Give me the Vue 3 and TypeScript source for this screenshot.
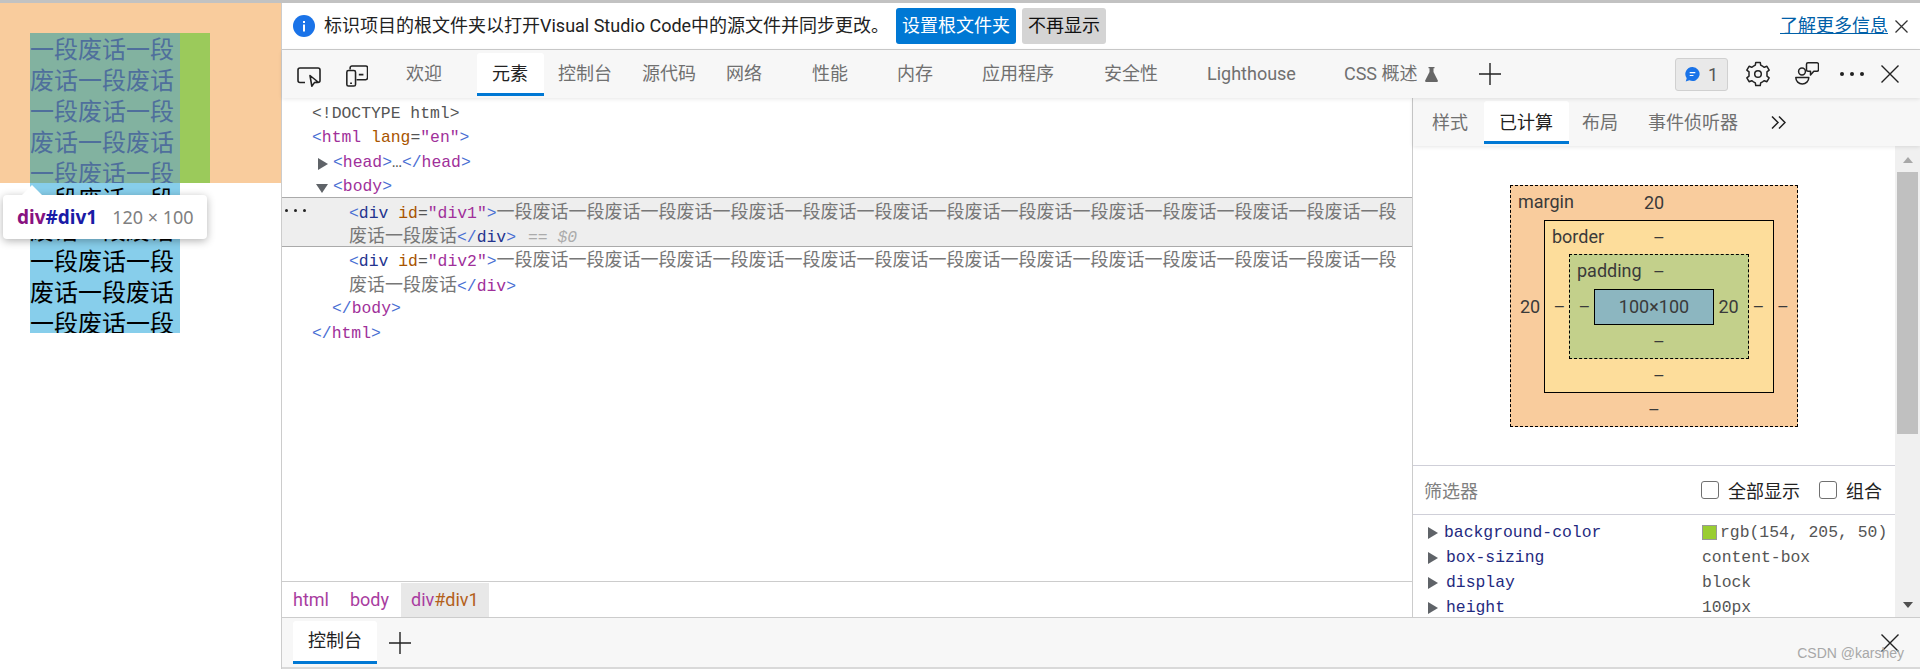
<script setup lang="ts">
interface Tab { label: string; gap: number; active?: boolean }
const tabs: Tab[] = [
  { label: '欢迎', gap: 0 },
  { label: '元素', gap: 50, active: true },
  { label: '控制台', gap: 30 },
  { label: '源代码', gap: 30 },
  { label: '网络', gap: 30 },
  { label: '性能', gap: 50 },
  { label: '内存', gap: 49 },
  { label: '应用程序', gap: 49 },
  { label: '安全性', gap: 50 },
  { label: 'Lighthouse', gap: 49 },
  { label: 'CSS 概述', gap: 48 },
]
const sideTabs: Tab[] = [
  { label: '样式', gap: 0 },
  { label: '已计算', gap: 31, active: true },
  { label: '布局', gap: 29 },
  { label: '事件侦听器', gap: 30 },
]
const phrase = '一段废话'
const longLine = phrase.repeat(12) + '一段'
const pageText = phrase.repeat(14)

const gearPath = (() => {
  const c = 12
  const pts: string[] = []
  for (let i = 0; i < 6; i++) {
    const a = (i * 60 - 90) * Math.PI / 180
    const list: Array<[number, number]> = [[-30, 9], [-17, 9.2], [-11, 11.8], [11, 11.8], [17, 9.2]]
    for (const [d, r] of list) {
      const t = a + d * Math.PI / 180
      pts.push(`${(c + r * Math.cos(t)).toFixed(2)} ${(c + r * Math.sin(t)).toFixed(2)}`)
    }
  }
  return 'M' + pts.join('L') + 'Z'
})()

const props = [
  { name: 'background-color', value: 'rgb(154, 205, 50)', swatch: true },
  { name: 'box-sizing', value: 'content-box' },
  { name: 'display', value: 'block' },
  { name: 'height', value: '100px' },
]
</script>

<template>
  <div class="root">
    <section class="page">
      <div class="page-band">
        <div class="div1"><div class="div1-content">{{ pageText }}</div></div>
      </div>
      <div class="div2">{{ pageText }}</div>
      <div class="tip">
        <span class="tip-arrow"></span>
        <b><span class="t-tag">div</span><span class="t-id">#div1</span></b>
        <span class="tip-size">120 × 100</span>
      </div>
    </section>

    <section class="devtools">
      <header class="info">
        <svg class="info-icon" viewBox="0 0 22 22" width="22" height="22">
          <circle cx="11" cy="11" r="11" fill="#1a73e8" />
          <rect x="10" y="9.5" width="2" height="7" fill="#fff" />
          <rect x="10" y="6" width="2" height="2" fill="#fff" />
        </svg>
        <span class="info-text">标识项目的根文件夹以打开Visual Studio Code中的源文件并同步更改。</span>
        <button class="btn primary">设置根文件夹</button>
        <button class="btn plain">不再显示</button>
        <a class="learn">了解更多信息</a>
        <svg class="info-close" viewBox="0 0 13 13" width="13" height="13">
          <path d="M.5.5l12 12M12.5.5l-12 12" stroke="#333" stroke-width="1.3" fill="none" />
        </svg>
      </header>

      <nav class="toolbar">
        <svg class="tool-a" viewBox="0 0 24 20" width="24" height="20" fill="none" stroke="#222" stroke-width="1.6">
          <path d="M8 15.5H3a2 2 0 0 1-2-2V3a2 2 0 0 1 2-2h18a2 2 0 0 1 2 2v10.5a2 2 0 0 1-2 2h-2" />
          <path d="M13 8.5l8 6.500-3.600.6-2.600 3.600z" stroke-linejoin="round" />
        </svg>
        <svg class="tool-b" viewBox="0 0 24 24" width="22" height="22" fill="none" stroke="#222" stroke-width="1.7">
          <path d="M4.500 5V3a2 2 0 0 1 2-2h15a2 2 0 0 1 2 2v11a2 2 0 0 1-2 2h-10" />
          <rect x=".9" y="6" width="9.500" height="17" rx="1.800" />
          <path d="M4.500 20h2M14 10.500h5" />
        </svg>
        <div class="tabs">
          <span v-for="t in tabs" :key="t.label" class="tab" :class="{ active: t.active }" :style="{ marginLeft: t.gap + 'px' }">{{ t.label }}</span>
        </div>
        <svg class="flask" viewBox="0 0 13 15" width="13" height="15">
          <path d="M3.500 0h6v1.200H8.500V5l4.300 8.500a1 1 0 0 1-.9 1.500H1.100a1 1 0 0 1-.9-1.500L4.500 5V1.200h-1z" fill="#666" />
        </svg>
        <svg class="plus" viewBox="0 0 22 22" width="22" height="22">
          <path d="M11 0v22M0 11h22" stroke="#222" stroke-width="1.400" />
        </svg>
        <span class="spacer"></span>
        <span class="chat">
          <svg viewBox="0 0 16 16" width="15" height="15">
            <path d="M8 0a7.500 7.500 0 1 1-3.300 14.200L.8 15.500l1-3.600A7.500 7.500 0 0 1 8 0z" fill="#1a73e8" />
            <path d="M5 6h6M5 9h4" stroke="#fff" stroke-width="1.200" />
          </svg>
          <span>1</span>
        </span>
        <svg class="gear" viewBox="-1 -1 26 26" width="26" height="26" fill="none" stroke="#222" stroke-width="1.500" stroke-linejoin="round">
          <path :d="gearPath" />
          <circle cx="12" cy="12" r="3.300" />
        </svg>
        <svg class="people" viewBox="0 0 24 24" width="24" height="24" fill="none" stroke="#222" stroke-width="1.500">
          <circle cx="7" cy="9.500" r="3.400" />
          <path d="M.8 15.500h13a6.500 6.500 0 0 1-13 0z" stroke-linejoin="round" />
          <path d="M13 .8h9a1.500 1.500 0 0 1 1.500 1.500v5.500a1.500 1.500 0 0 1-1.500 1.500h-3.200L15.500 13V9.300H13a1.500 1.500 0 0 1-1.500-1.500V2.300A1.500 1.500 0 0 1 13 .8z" stroke-linejoin="round" />
        </svg>
        <span class="dots"><i></i><i></i><i></i></span>
        <svg class="close" viewBox="0 0 18 18" width="18" height="18">
          <path d="M.5.5l17 17M17.500.5l-17 17" stroke="#222" stroke-width="1.400" />
        </svg>
      </nav>

      <div class="work">
        <div class="elements">
          <div class="code">
            <div class="row r0 doctype">&lt;!DOCTYPE html&gt;</div>
            <div class="row r0"><span class="b">&lt;</span><span class="p">html</span> <span class="a">lang</span><span class="g">=</span><span class="p">"en"</span><span class="b">&gt;</span></div>
            <div class="row r1"><i class="arr right"></i><span class="b">&lt;</span><span class="p">head</span><span class="b">&gt;</span><span class="g">…</span><span class="b">&lt;/</span><span class="p">head</span><span class="b">&gt;</span></div>
            <div class="row r1"><i class="arr down"></i><span class="b">&lt;</span><span class="p">body</span><span class="b">&gt;</span></div>
            <div class="selected">
              <span class="more"><i></i><i></i><i></i></span>
              <div class="row r2"><span class="b">&lt;</span><span class="n">div</span> <span class="a">id</span><span class="g">=</span><span class="p">"div1"</span><span class="b">&gt;</span><span class="cjk">{{ longLine }}</span></div>
              <div class="row r2"><span class="cjk">废话一段废话</span><span class="b">&lt;/</span><span class="n">div</span><span class="b">&gt;</span> <span class="eq">== $0</span></div>
            </div>
            <div class="row r2"><span class="b">&lt;</span><span class="n">div</span> <span class="a">id</span><span class="g">=</span><span class="p">"div2"</span><span class="b">&gt;</span><span class="cjk">{{ longLine }}</span></div>
            <div class="row r2"><span class="cjk">废话一段废话</span><span class="b">&lt;/</span><span class="p">div</span><span class="b">&gt;</span></div>
            <div class="row r1b"><span class="b">&lt;/</span><span class="p">body</span><span class="b">&gt;</span></div>
            <div class="row r0"><span class="b">&lt;/</span><span class="p">html</span><span class="b">&gt;</span></div>
          </div>
          <div class="crumbs">
            <span class="crumb c-html">html</span>
            <span class="crumb c-body">body</span>
            <span class="crumb c-cur"><span class="c-tag">div</span><span class="c-id">#div1</span></span>
          </div>
        </div>

        <aside class="side">
          <div class="side-tabs">
            <span v-for="t in sideTabs" :key="t.label" class="stab" :class="{ active: t.active }" :style="{ marginLeft: t.gap + 'px' }">{{ t.label }}</span>
            <svg class="chev" viewBox="0 0 15 13" width="15" height="13" fill="none" stroke="#222" stroke-width="1.500">
              <path d="M1 .5l6 6-6 6M8 .5l6 6-6 6" />
            </svg>
          </div>
          <div class="side-body">
            <div class="side-main">
              <div class="bm-wrap">
                <div class="bm bm-margin">
                  <span class="bm-label">margin</span>
                  <span class="bm-top">20</span>
                  <span class="bm-side l">20</span>
                  <div class="bm bm-border">
                    <span class="bm-label">border</span>
                    <span class="bm-top">–</span>
                    <span class="bm-side l">–</span>
                    <div class="bm bm-padding">
                      <span class="bm-label">padding</span>
                      <span class="bm-top">–</span>
                      <span class="bm-side l">–</span>
                      <div class="bm-content">100×100</div>
                      <span class="bm-side r">20</span>
                      <span class="bm-bottom">–</span>
                    </div>
                    <span class="bm-side r">–</span>
                    <span class="bm-bottom">–</span>
                  </div>
                  <span class="bm-side r">–</span>
                  <span class="bm-bottom">–</span>
                </div>
              </div>
              <div class="filter">
                <span class="filter-ph">筛选器</span>
                <span class="spacer"></span>
                <span class="check first"></span><span class="check-text">全部显示</span>
                <span class="check second"></span><span class="check-text">组合</span>
              </div>
              <div class="props">
                <div v-for="(p, i) in props" :key="p.name" class="prop">
                  <i class="arr right"></i>
                  <span class="prop-name" :class="{ tight: i === 0 }">{{ p.name }}</span>
                  <span class="prop-val"><i v-if="p.swatch" class="swatch"></i>{{ p.value }}</span>
                </div>
              </div>
            </div>
            <div class="scroll">
              <i class="up"></i>
              <div class="thumb"></div>
              <span class="spacer"></span>
              <i class="dn"></i>
            </div>
          </div>
        </aside>
      </div>

      <footer class="drawer">
        <span class="d-tab">控制台</span>
        <svg class="d-plus" viewBox="0 0 22 22" width="22" height="22">
          <path d="M11 0v22M0 11h22" stroke="#222" stroke-width="1.400" />
        </svg>
        <span class="spacer"></span>
        <svg class="d-close" viewBox="0 0 18 18" width="18" height="18">
          <path d="M.5.5l17 17M17.500.5l-17 17" stroke="#222" stroke-width="1.400" />
        </svg>
        <span class="mark">CSDN @karshey</span>
      </footer>
    </section>
  </div>
</template>

<style>
html, body { margin: 0; background: #fff; }
</style>

<style scoped>
* { box-sizing: border-box; }
.root {
  width: 1920px; height: 669px; border-top: 3px solid #c2c2c2;
  display: flex; overflow: hidden; background: #fff; color: #222;
  font-family: Roboto, "Noto Sans CJK SC", sans-serif; font-size: 18px;
}
.spacer { flex: 1; }

/* inspected page */
.page { width: 281px; flex: none; position: relative; background: #fff; }
.page-band { height: 180px; background: #f9cc9d; padding: 30px 0 0 30px; }
.div1 { width: 180px; height: 150px; background: #9bca5b; overflow: hidden; }
.div1-content { width: 150px; height: 150px; background: #82b2a0; color: #4f6f9c; overflow: hidden; font-family: "Noto Sans", "Noto Sans CJK SC", sans-serif; font-size: 24px; line-height: 31px; }
.div2 { margin-left: 30px; width: 150px; height: 150px; background: #87ceeb; color: #000; overflow: hidden; font-family: "Noto Sans", "Noto Sans CJK SC", sans-serif; font-size: 24px; line-height: 31px; }
.tip {
  position: absolute; left: 3px; top: 192px; width: 204px; height: 44px; background: #fff; border-radius: 4px;
  box-shadow: 0 2px 8px rgba(0,0,0,.3); display: flex; align-items: center; padding-left: 14px; gap: 15px; line-height: 24px;
  font-family: "Noto Sans", "Noto Sans CJK SC", sans-serif;
}
.tip b { font-size: 19px; }
.tip-arrow { position: absolute; left: 19px; top: -10px; width: 0; height: 0; border: 10px solid transparent; border-top: 0; border-bottom-color: #fff; }
.t-tag { color: #881280; }
.t-id { color: #1a1aa6; }
.tip-size { color: #808080; }

/* devtools */
.devtools { flex: 1; min-width: 0; border-left: 1px solid #ccc; display: flex; flex-direction: column; }
.info { height: 47px; flex: none; border-bottom: 1px solid #ccc; display: flex; align-items: center; background: #fff; position: relative; padding-left: 11px; }
.info-icon { flex: none; margin-right: 9px; }
.info-text { width: 572px; flex: none; white-space: nowrap; color: #222; font-size: 18px; line-height: 24px; }
.btn { height: 36px; border: 0; border-radius: 3px; padding: 0; font: inherit; line-height: 36px; text-align: center; }
.primary { width: 120px; background: #0078d4; color: #fff; }
.plain { width: 84px; margin-left: 6px; background: #d4d4d4; color: #111; }
.learn { margin-left: auto; margin-right: 32px; color: #0060a8; text-decoration: underline; line-height: 24px; }
.info-close { position: absolute; right: 12px; top: 17px; }

.toolbar { height: 48px; flex: none; background: #f7f7f7; display: flex; align-items: center; position: relative; z-index: 2; box-shadow: 0 1px 4px rgba(0,0,0,.1); }
.tool-a { position: absolute; left: 15px; top: 17px; }
.tool-b { position: absolute; left: 64px; top: 15px; }
.tabs { display: flex; margin-left: 124px; height: 48px; }
.tab { height: 48px; line-height: 48px; color: #707070; white-space: nowrap; position: relative; }
.tab.active { color: #222; }
.tab.active::before {
  content: ""; position: absolute; left: -15px; right: -16px; top: 3px; bottom: 2px; background: #fff; z-index: -1;
  border-radius: 3px 3px 0 0; border-bottom: 3px solid #0078d4;
}
.flask { margin-left: 8px; }
.plus { margin-left: 41px; }
.chat { width: 53px; height: 33px; margin-right: 17px; border: 1px solid #d0d0d0; border-radius: 3px; background: #e9e9e9; display: flex; align-items: center; justify-content: center; gap: 8px; color: #555; }
.gear { margin-right: 24px; }
.people { margin-right: 21px; }
.dots { display: flex; gap: 6px; margin-right: 17px; }
.dots i { width: 4px; height: 4px; border-radius: 50%; background: #222; }
.close { margin-right: 21px; }

.work { flex: 1; min-height: 0; display: flex; }
.elements { width: 1130px; flex: none; display: flex; flex-direction: column; }
.code { flex: 1; padding-top: 4px; font-family: "Liberation Mono", "Noto Sans CJK SC", monospace; font-size: 16.4px; }
.row { height: 24.400px; line-height: 24.400px; white-space: pre; position: relative; }
.r0 { padding-left: 30px; }
.r1 { padding-left: 51px; }
.r1b { padding-left: 50px; }
.r2 { padding-left: 67px; line-height: 20.400px; }
.doctype { color: #555; }
.b { color: #4a6fd3; }
.p { color: #a0309a; }
.n { color: #24348f; }
.a { color: #a85400; }
.g { color: #555; }
.cjk { font-family: "Noto Sans CJK SC", sans-serif; font-size: 18px; color: #777; }
.eq { color: #ababab; font-style: italic; padding-left: 2px; }
.selected { background: #eee; border-top: 1px solid #aaa; border-bottom: 1px solid #aaa; height: 50px; margin-top: -2.600px; padding-top: 1.600px; position: relative; }
.selected + .row { margin-top: 1.400px; }
.more { position: absolute; left: 3px; top: 11px; display: flex; gap: 6px; }
.more i { width: 3px; height: 3px; border-radius: 50%; background: #222; }
.arr { position: absolute; display: block; width: 0; height: 0; }
.row .arr { top: 7px; }
.arr.right { left: 36px; border-left: 10px solid #5f6368; border-top: 6px solid transparent; border-bottom: 6px solid transparent; }
.arr.down { left: 34px; margin-top: 2px; border-top: 9px solid #5f6368; border-left: 6px solid transparent; border-right: 6px solid transparent; }

.crumbs { height: 36px; flex: none; border-top: 1px solid #ccc; display: flex; padding-left: 11px; line-height: 33px; padding-top: 1px; }
.crumb { padding: 0 0; height: 34px; }
.c-html { color: #a83da0; width: 57px; }
.c-body { color: #a83da0; width: 51px; }
.c-cur { background: #e8e8e8; width: 88px; padding-left: 10px; white-space: nowrap; }
.c-tag { color: #a83da0; }
.c-id { color: #b3601a; }

.side { flex: 1; min-width: 0; border-left: 1px solid #ccc; display: flex; flex-direction: column; }
.side-tabs { height: 48px; flex: none; background: #f7f7f7; display: flex; align-items: center; padding-left: 19px; box-shadow: 0 1px 4px rgba(0,0,0,.1); position: relative; }
.stab { height: 48px; line-height: 50px; color: #707070; position: relative; z-index: 1; white-space: nowrap; }
.stab.active { color: #222; }
.stab.active::before { content: ""; position: absolute; left: -15px; right: -16px; top: 3px; bottom: 2px; background: #fff; z-index: -1; border-bottom: 3px solid #0078d4; border-radius: 3px 3px 0 0; }
.chev { margin-left: 33px; }
.side-body { flex: 1; min-height: 0; display: flex; }
.side-main { flex: 1; min-width: 0; overflow: hidden; }
.scroll { width: 25px; flex: none; background: #f0f0f0; display: flex; flex-direction: column; align-items: center; padding: 11px 0 9px; }
.up, .dn { width: 0; height: 0; border-left: 5.500px solid transparent; border-right: 5.500px solid transparent; display: block; }
.up { border-bottom: 6px solid #a8a8a8; }
.dn { border-top: 6px solid #505050; }
.thumb { width: 21px; height: 262px; margin-top: 9px; background: #c0c0c0; }

.bm-wrap { height: 320px; border-bottom: 1px solid #cfcfd8; padding: 39px 0 0 97px; }
.bm { display: grid; position: relative; text-align: center; color: #3a3a3a; line-height: 24px; }
.bm-margin { width: 288px; height: 242px; background: #f9cc9d; border: 1px dashed #000; grid-template: 34px 1fr 33px / 33px 1fr 23px; }
.bm-border { background: #fddd9b; border: 1px solid #000; grid-template: 33px 1fr 33px / 24px 1fr 24px; }
.bm-padding { background: #c3d08b; border: 1px dashed #000; grid-template: 34px 1fr 33px / 24px 1fr 34px; }
.bm-content { background: #8cb6c0; border: 1px solid #000; display: flex; align-items: center; justify-content: center; }
.bm-label { position: absolute; left: 7px; top: 4px; }
.bm-top, .bm-bottom { grid-column: 1 / -1; align-self: center; }
.bm-side { align-self: center; }
.bm-side.l { padding-left: 5px; }
.bm-side.r { padding-right: 5px; }

.filter { height: 49px; border-bottom: 1px solid #cfcfd8; display: flex; align-items: center; padding-left: 11px; }
.filter-ph { color: #808080; }
.check { width: 18px; height: 18px; border: 1.500px solid #707070; border-radius: 3px; background: #fff; }
.check.first { margin-right: 9px; }
.check.second { margin: 0 9px 0 19px; }
.check-text:last-child { margin-right: 13px; }
.props { font-family: "Liberation Mono", monospace; font-size: 16.4px; padding-top: 5px; }
.prop { height: 25px; line-height: 25px; display: flex; position: relative; white-space: pre; }
.prop .arr.right { left: 15px; top: 7px; }
.prop-name { width: 289px; padding-left: 33px; color: #1f2a80; }
.prop-name.tight { padding-left: 31px; }
.prop-val { color: #555; display: flex; align-items: center; }
.swatch { width: 15px; height: 15px; background: #9acd32; border: 1px solid #999; margin-right: 3px; }

.drawer { height: 52px; flex: none; background: #f7f7f7; border-top: 1px solid #ccc; border-bottom: 2px solid #d9d9d9; display: flex; align-items: center; position: relative; }
.d-tab { margin-left: 11px; width: 84px; height: 43px; background: #fff; border-bottom: 3px solid #0078d4; border-radius: 3px 3px 0 0; text-align: center; line-height: 40px; }
.d-plus { margin-left: 12px; }
.d-close { margin-right: 21px; }
.mark { position: absolute; right: 16px; top: 26px; font-family: "Liberation Sans", sans-serif; font-size: 14px; line-height: 18px; color: #a8a8a8; }
</style>
